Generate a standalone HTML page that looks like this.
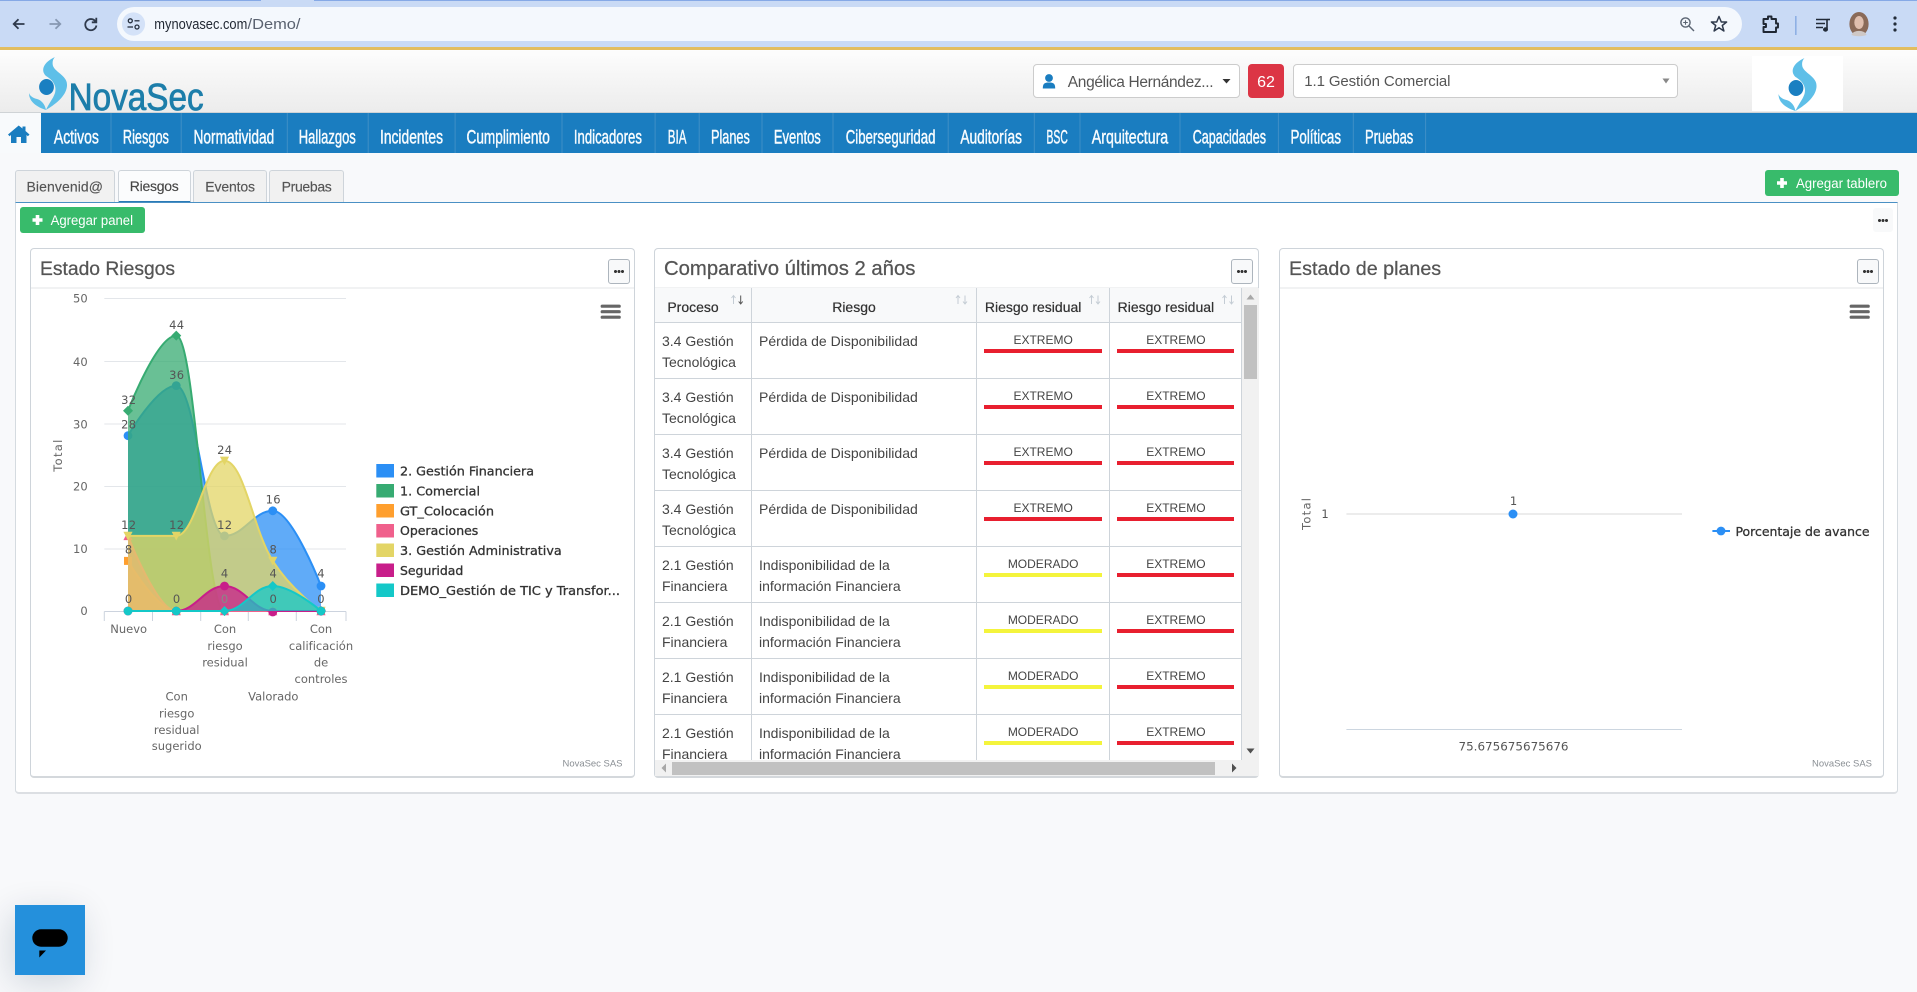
<!DOCTYPE html>
<html lang="es">
<head>
<meta charset="utf-8">
<title>NovaSec</title>
<style>
html,body{margin:0;padding:0;width:1917px;height:992px;overflow:hidden;background:#f8f9fb;font-family:"Liberation Sans",sans-serif;color:#444}
.a{position:absolute}
#top{position:absolute;left:0;top:0;width:1917px;height:47px;background:#c9daf5;border-top:1px solid #86a9e6;box-sizing:border-box}
#hdr{position:absolute;left:0;top:47px;width:1917px;height:66px;box-sizing:border-box;border-top:3px solid #e2bd5f;background:linear-gradient(#fdfdfd,#ececec);border-bottom:1px solid #cfd3d6}
#nav{position:absolute;left:0;top:113px;width:1917px;height:40px;background:#1a7dc0}
.tab{position:absolute;top:170px;height:32px;box-sizing:border-box;background:#f1f1f1;border:1px solid #ced4da;border-bottom:0;border-radius:3px 3px 0 0}
.tab.on{background:#fbfcfd;border-bottom:2px solid #2a7ab5;height:33px}
#content{position:absolute;left:15px;top:202px;width:1883px;height:592px;box-sizing:border-box;background:#fff;border:1px solid #d5dbe0;border-top:1px solid #4a90c4;border-bottom:2px solid #dcdfe3;border-radius:0 0 4px 4px}
.panel{position:absolute;top:248px;width:605px;height:530px;box-sizing:border-box;background:#fff;border:1px solid #ced4da;border-bottom:2px solid #d4d8dc;border-radius:4px}
.phead{position:absolute;left:0;right:0;top:0;height:38px;border-bottom:2px solid #f1f2f3}
.ptitle{position:absolute;left:9px;top:8px;line-height:24px;color:#555;white-space:nowrap;-webkit-text-stroke:.25px #555}
.more{position:absolute;top:9.5px;width:21.5px;height:25px;box-sizing:border-box;background:#f8f9fa;border:1px solid #adb5bd;border-radius:3px}
.more i,.more2 i{position:absolute;left:5px;top:10.5px;width:10px;height:3px;background:radial-gradient(circle 1.5px at 1.5px 1.5px,#333 96%,transparent) 0 0/3.5px 3px repeat-x}
.more2{position:absolute;left:1873px;top:208px;width:20px;height:24px;background:#f8f9fa;border-radius:3px}
.more2 i{left:5px}
#tw{position:absolute;left:655px;top:288px;width:587px;height:472px;overflow:hidden;background:#fff}
#tw table{border-collapse:collapse;table-layout:fixed;width:587px;font-size:14px;color:#444}
#tw th{height:34px;box-sizing:border-box;background:#f8f9fa;border:1px solid #ced4da;border-top:0;border-left:0;font-weight:400;color:#333;text-shadow:0 0 .5px #333;padding:5px 20px 0 0;text-align:center;line-height:17px;font-size:14px;white-space:nowrap}
#tw td{height:56.1px;box-sizing:border-box;border:1px solid #ced4da;border-left:0;vertical-align:top;padding:8px 7px 0;line-height:21px}
#tw tr td:first-child{border-left:0}
.l{margin-top:1px;height:17px;line-height:16.5px;font-size:12px;text-align:center;color:#444;border-bottom:4px solid #e81f2f;box-sizing:content-box}
.y{border-bottom-color:#f4f43c}
.r{border-bottom-color:#e81f2f}
.vbar{position:absolute;left:1242px;top:288px;width:17px;height:472px;background:#f1f1f1}
.hbar{position:absolute;left:655px;top:760px;width:604px;height:16px;background:#f1f1f1}
#chat{position:absolute;left:15px;top:905px;width:70px;height:70px;background:#2490dc;box-shadow:-4px 8px 34px rgba(0,40,70,.16)}
svg{position:absolute;left:0;top:0;overflow:visible}
</style>
</head>
<body>

<div id="top"></div>
<div class="a" style="left:261px;top:0;width:53px;height:1px;background:#c9daf5"></div>
<div class="a" style="left:117px;top:7px;width:1625px;height:34px;border-radius:17px;background:#f4f8fd"></div>
<div id="hdr"></div>
<div id="nav"></div>
<div class="a" style="left:0;top:113px;width:41px;height:40px;background:#f8fafc"></div>

<div class="a" style="left:1033px;top:64px;width:207px;height:34px;box-sizing:border-box;background:#fff;border:1px solid #ccc;border-radius:4px"></div>
<div class="a" style="left:1248px;top:64px;width:36px;height:34px;background:#dc3545;border-radius:4px;color:#fff;font-size:16px;line-height:37px;text-align:center">62</div>
<div class="a" style="left:1293px;top:64px;width:385px;height:34px;box-sizing:border-box;background:#fff;border:1px solid #ccc;border-radius:4px"></div>
<div class="a" style="left:1752px;top:56px;width:91px;height:55px;background:#fff"></div>

<div class="tab" style="left:15px;width:100px"></div>
<div class="tab on" style="left:118px;width:73px"></div>
<div class="tab" style="left:193px;width:74px"></div>
<div class="tab" style="left:269px;width:75px"></div>
<div class="a" style="left:1765px;top:170px;width:134px;height:26px;background:#38bb6b;border-radius:3px"></div>

<div id="content"></div>
<div class="a" style="left:20px;top:207px;width:125px;height:26px;background:#38bb6b;border-radius:3px"></div>
<div class="more2"><i></i></div>

<div class="panel" style="left:30px">
  <div class="phead"></div>
  <div class="ptitle" style="font-size:19.3px;top:9px">Estado Riesgos</div>
  <div class="more" style="left:577px"><i></i></div>
</div>
<div class="panel" style="left:654px">
  <div class="phead"></div>
  <div class="ptitle" style="font-size:20.3px">Comparativo últimos 2 años</div>
  <div class="more" style="left:576px"><i></i></div>
</div>
<div class="panel" style="left:1279px">
  <div class="phead"></div>
  <div class="ptitle" style="font-size:19.7px">Estado de planes</div>
  <div class="more" style="left:577px"><i></i></div>
</div>

<div id="tw">
<table>
<colgroup><col style="width:96.5px"><col style="width:225px"><col style="width:133.3px"><col style="width:132.2px"></colgroup>
<thead><tr>
<th>Proceso</th>
<th>Riesgo</th>
<th>Riesgo residual</th>
<th>Riesgo residual</th>
</tr></thead>
<tbody>
<tr><td>3.4 Gestión Tecnológica</td><td>Pérdida de Disponibilidad</td><td><div class="l r">EXTREMO</div></td><td><div class="l r">EXTREMO</div></td></tr>
<tr><td>3.4 Gestión Tecnológica</td><td>Pérdida de Disponibilidad</td><td><div class="l r">EXTREMO</div></td><td><div class="l r">EXTREMO</div></td></tr>
<tr><td>3.4 Gestión Tecnológica</td><td>Pérdida de Disponibilidad</td><td><div class="l r">EXTREMO</div></td><td><div class="l r">EXTREMO</div></td></tr>
<tr><td>3.4 Gestión Tecnológica</td><td>Pérdida de Disponibilidad</td><td><div class="l r">EXTREMO</div></td><td><div class="l r">EXTREMO</div></td></tr>
<tr><td>2.1 Gestión Financiera</td><td>Indisponibilidad de la<br>información Financiera</td><td><div class="l y">MODERADO</div></td><td><div class="l r">EXTREMO</div></td></tr>
<tr><td>2.1 Gestión Financiera</td><td>Indisponibilidad de la<br>información Financiera</td><td><div class="l y">MODERADO</div></td><td><div class="l r">EXTREMO</div></td></tr>
<tr><td>2.1 Gestión Financiera</td><td>Indisponibilidad de la<br>información Financiera</td><td><div class="l y">MODERADO</div></td><td><div class="l r">EXTREMO</div></td></tr>
<tr><td>2.1 Gestión Financiera</td><td>Indisponibilidad de la<br>información Financiera</td><td><div class="l y">MODERADO</div></td><td><div class="l r">EXTREMO</div></td></tr>
</tbody>
</table>
</div>
<div class="vbar"></div>
<div class="hbar"></div>
<div class="a" style="left:1244px;top:305px;width:13px;height:74px;background:#c1c1c1"></div>
<div class="a" style="left:672px;top:762px;width:543px;height:13px;background:#c1c1c1"></div>

<div id="chat"></div>

<svg width="1917" height="992" viewBox="0 0 1917 992" font-family="'Liberation Sans',sans-serif">
<defs>
<path id="mc" d="M0-4.4A4.4 4.4 0 1 1 0 4.4A4.4 4.4 0 1 1 0-4.4Z"/>
<path id="md" d="M0-5L5 0L0 5L-5 0Z"/>
<path id="ms" d="M-4-4H4V4H-4Z"/>
<path id="mt" d="M0-4.6L4.6 4.2H-4.6Z"/>
<path id="mv" d="M-4.6-4.2H4.6L0 4.6Z"/>
<g id="drop">
<path fill="#5ebfe8" d="M55 57C44 62 40 70 46 76C53 80 57 86 55 93C53 99 49 103 46 110C54 105 66 97 67 86C68 76 56 73 53 66C52 62 53 59 55 57Z"/>
<path fill="#5ebfe8" d="M29 93C29 102 37 107 46 110C45 104 41 100 37 99C33 98 30 96 29 93Z"/>
<ellipse cx="46.5" cy="87" rx="7.4" ry="8" fill="#1a7fc1"/>
</g>
<g id="bars"><path d="M0 1.7H17M0 7.2H17M0 12.7H17" stroke="#666" stroke-width="3.2" stroke-linecap="round" fill="none"/></g>
<g id="ua"><path d="M0 9V1M-2 3L0 .5L2 3" fill="none" stroke="currentColor" stroke-width="1"/></g>
<g id="da"><path d="M0 0V8M-2 6L0 8.5L2 6" fill="none" stroke="currentColor" stroke-width="1"/></g>
</defs>

<!-- browser chrome icons -->
<g fill="none" stroke="#2f3a4c" stroke-width="1.8">
<path d="M24.5 24H14M18.5 19.2L13.7 24L18.5 28.8"/>
<path stroke="#8798b2" d="M49.5 24H60M55.5 19.2L60.3 24L55.5 28.8"/>
<path d="M95.5 21.5A5.6 5.6 0 1 0 96.4 25.5M96.3 17.8V22.3H91.8"/>
</g>
<ellipse cx="133.5" cy="24" rx="11.6" ry="11.6" fill="#d4e2f8"/>
<g fill="none" stroke="#26303f" stroke-width="1.3">
<circle cx="130.3" cy="20.8" r="2"/><path d="M134.5 20.8H139.5"/>
<circle cx="137" cy="27" r="2"/><path d="M127.5 27H133"/>
</g>
<text x="154.3" y="29" font-size="14.5" fill="#232a35" textLength="93" lengthAdjust="spacingAndGlyphs">mynovasec.com</text>
<text x="247.5" y="29" font-size="14.5" fill="#5a6270" textLength="53" lengthAdjust="spacingAndGlyphs">/Demo/</text>

<g fill="none" stroke="#5a6472" stroke-width="1.4">
<circle cx="1685.5" cy="22.5" r="4.6"/><path d="M1689 26L1694 31"/><path stroke-width="1.1" d="M1683.2 22.5H1687.8M1685.5 20.2V24.8"/>
</g>
<path fill="none" stroke="#2f3a4c" stroke-width="1.5" stroke-linejoin="round" d="M1719 16.5L1721.3 22H1726.6L1722.3 25.5L1723.9 31L1719 27.8L1714.1 31L1715.7 25.5L1711.4 22H1716.7Z"/>
<path fill="none" stroke="#1f2733" stroke-width="1.9" stroke-linejoin="round" d="M1763.5 19H1768V16.5H1771.5V19H1776V23.5H1778V27.5H1776V32H1763.5V27H1766V24H1763.5Z"/>
<rect x="1795" y="16" width="1.6" height="19" fill="#8eb0e4"/>
<path d="M1816 19.5H1827M1816 23.5H1825M1816 27.5H1823" stroke="#222b38" stroke-width="1.5"/>
<path d="M1827 20V29" stroke="#222b38" stroke-width="1.6"/><ellipse cx="1825.5" cy="29.5" rx="2.5" ry="2.2" fill="#222b38"/><path d="M1827 19.5H1830" stroke="#222b38" stroke-width="1.6"/>
<ellipse cx="1859" cy="24" rx="9.6" ry="12" fill="#8a6a58"/>
<ellipse cx="1859" cy="22.5" rx="4.7" ry="6.5" fill="#e0bfae"/>
<path d="M1851.5 35C1853 29.5 1865 29.5 1866.5 35C1863 36.6 1855 36.6 1851.5 35Z" fill="#cfc8c5"/>
<circle cx="1895" cy="18" r="1.6" fill="#222b38"/><circle cx="1895" cy="24" r="1.6" fill="#222b38"/><circle cx="1895" cy="30" r="1.6" fill="#222b38"/>

<!-- logos -->
<use href="#drop"/>
<text x="68.6" y="110" font-size="38" fill="#1d7eaa" stroke="#1d7eaa" stroke-width=".8" textLength="135" lengthAdjust="spacingAndGlyphs">NovaSec</text>
<use href="#drop" transform="translate(1749.5 1)"/>

<!-- user dropdown -->
<circle cx="1049" cy="78" r="3.9" fill="#1a7dc0"/>
<path d="M1042.8 88.5C1042.8 83.5 1044.5 82.5 1049 82.5C1053.5 82.5 1055.2 83.5 1055.2 88.5Z" fill="#1a7dc0"/>
<text x="1067.8" y="87" font-size="15.5" fill="#555" textLength="145.7" lengthAdjust="spacing">Angélica Hernández...</text>
<path d="M1222.5 79H1230.5L1226.5 83.5Z" fill="#333"/>
<text x="1304.3" y="86" font-size="15" fill="#555" textLength="146.2" lengthAdjust="spacing">1.1 Gestión Comercial</text>
<path d="M1662.5 78.5H1669.5L1666 83.5Z" fill="#888"/>

<!-- nav -->
<path d="M18.7 125.5L8 134.5L9.6 136.2L11 135V143H16.5V137H21V143H26.5V135L27.9 136.2L29.5 134.5L25.5 131V126.5H22.5V128.5Z" fill="#1a7dc0"/>
<g stroke="#3f8fc6" stroke-width="1">
<path d="M111 113V153M181.2 113V153M287.3 113V153M368.2 113V153M455.1 113V153M562 113V153M655.1 113V153M699.2 113V153M762 113V153M833 113V153M948.2 113V153M1034.3 113V153M1080 113V153M1180 113V153M1278.4 113V153M1353.3 113V153M1425.6 113V153"/>
</g>
<g font-size="19" fill="#f7fbfe" stroke="#f7fbfe" stroke-width=".45">
<text x="53.9" y="143.3" textLength="45" lengthAdjust="spacingAndGlyphs">Activos</text>
<text x="122.9" y="143.3" textLength="46" lengthAdjust="spacingAndGlyphs">Riesgos</text>
<text x="193.5" y="143.3" textLength="80.8" lengthAdjust="spacingAndGlyphs">Normatividad</text>
<text x="298.8" y="143.3" textLength="57" lengthAdjust="spacingAndGlyphs">Hallazgos</text>
<text x="380" y="143.3" textLength="63" lengthAdjust="spacingAndGlyphs">Incidentes</text>
<text x="466.5" y="143.3" textLength="83.3" lengthAdjust="spacingAndGlyphs">Cumplimiento</text>
<text x="573.9" y="143.3" textLength="68" lengthAdjust="spacingAndGlyphs">Indicadores</text>
<text x="667.8" y="143.3" textLength="18.7" lengthAdjust="spacingAndGlyphs">BIA</text>
<text x="711" y="143.3" textLength="38.8" lengthAdjust="spacingAndGlyphs">Planes</text>
<text x="773.9" y="143.3" textLength="46.9" lengthAdjust="spacingAndGlyphs">Eventos</text>
<text x="845.7" y="143.3" textLength="89.8" lengthAdjust="spacingAndGlyphs">Ciberseguridad</text>
<text x="960.4" y="143.3" textLength="61.6" lengthAdjust="spacingAndGlyphs">Auditorías</text>
<text x="1046.5" y="143.3" textLength="21.3" lengthAdjust="spacingAndGlyphs">BSC</text>
<text x="1091.8" y="143.3" textLength="76.4" lengthAdjust="spacingAndGlyphs">Arquitectura</text>
<text x="1192.7" y="143.3" textLength="73.3" lengthAdjust="spacingAndGlyphs">Capacidades</text>
<text x="1290.5" y="143.3" textLength="50.5" lengthAdjust="spacingAndGlyphs">Políticas</text>
<text x="1365" y="143.3" textLength="48.3" lengthAdjust="spacingAndGlyphs">Pruebas</text>
</g>

<!-- tabs -->
<g font-size="14" fill="#555" stroke="#555" stroke-width=".15">
<text x="26.5" y="191.5" textLength="76.5">Bienvenid@</text>
<text x="129.8" y="191" textLength="49" fill="#444">Riesgos</text>
<text x="205.3" y="191.5" textLength="49.7">Eventos</text>
<text x="281.6" y="191.5" textLength="50.2">Pruebas</text>
</g>

<!-- buttons -->
<path d="M37.5 215V225M32.5 220H42.5" stroke="#fff" stroke-width="3.6"/>
<text x="50.6" y="225" font-size="13.5" fill="#fff" textLength="82.4" lengthAdjust="spacingAndGlyphs">Agregar panel</text>
<path d="M1782 178V188M1777 183H1787" stroke="#fff" stroke-width="3.6"/>
<text x="1796" y="188" font-size="13.5" fill="#fff" textLength="91" lengthAdjust="spacingAndGlyphs">Agregar tablero</text>

<!-- sort arrows -->
<g color="#c4ccd4">
<use href="#ua" x="733.5" y="295"/><use href="#da" x="740.7" y="295.5" color="#555"/>
<use href="#ua" x="958" y="295"/><use href="#da" x="965" y="295.5"/>
<use href="#ua" x="1091.5" y="295"/><use href="#da" x="1098" y="295.5"/>
<use href="#ua" x="1224.5" y="295"/><use href="#da" x="1231.5" y="295.5"/>
</g>

<!-- chart 1 -->
<g stroke="#e3e6ea" stroke-width="1">
<path d="M104.3 298.5H346M104.3 361.5H346M104.3 424H346M104.3 486.5H346M104.3 549H346"/>
</g>
<path d="M104.3 611.5H346M104.3 611.5V621M152.5 611.5V621M200.7 611.5V621M248.3 611.5V621M296.3 611.5V621M346 611.5V621" stroke="#ccd3de" stroke-width="1" fill="none"/>

<g stroke-width="2">
<g fill="#2b8ff5" stroke="#2b8ff5">
<path fill-opacity=".75" stroke="none" d="M128 435.7C128 435.7 156.95 385.6 176.25 385.6C195.55 385.6 205.2 535.9 224.5 535.9C243.8 535.9 253.45 510.8 272.75 510.8C292.05 510.8 321 586 321 586L321 611L128 611Z"/>
<path fill="none" d="M128 435.7C128 435.7 156.95 385.6 176.25 385.6C195.55 385.6 205.2 535.9 224.5 535.9C243.8 535.9 253.45 510.8 272.75 510.8C292.05 510.8 321 586 321 586"/>
<g stroke="none"><use href="#mc" x="128" y="435.7"/><use href="#mc" x="176.25" y="385.6"/><use href="#mc" x="224.5" y="535.9"/><use href="#mc" x="272.75" y="510.8"/><use href="#mc" x="321" y="586"/></g>
</g>
<g fill="#37ab72" stroke="#37ab72">
<path fill-opacity=".75" stroke="none" d="M128 410.7C128 410.7 156.95 335.6 176.25 335.6C195.55 335.6 205.2 611 224.5 611L321 611L128 611Z"/>
<path fill="none" d="M128 410.7C128 410.7 156.95 335.6 176.25 335.6C195.55 335.6 205.2 611 224.5 611L321 611"/>
<g stroke="none"><use href="#md" x="128" y="410.7"/><use href="#md" x="176.25" y="335.6"/><use href="#md" x="224.5" y="611"/><use href="#md" x="272.75" y="611"/><use href="#md" x="321" y="611"/></g>
</g>
<g fill="#ff9f2e" stroke="#ff9f2e">
<path fill-opacity=".75" stroke="none" d="M128 560.9C128 560.9 156.95 611 176.25 611L321 611L128 611Z"/>
<path fill="none" d="M128 560.9C128 560.9 156.95 611 176.25 611L321 611"/>
<g stroke="none"><use href="#ms" x="128" y="560.9"/><use href="#ms" x="176.25" y="611"/><use href="#ms" x="224.5" y="611"/><use href="#ms" x="272.75" y="611"/><use href="#ms" x="321" y="611"/></g>
</g>
<g fill="#f0608c" stroke="#f0608c">
<path fill-opacity=".75" stroke="none" d="M128 535.9C128 535.9 156.95 611 176.25 611L321 611L128 611Z"/>
<path fill="none" d="M128 535.9C128 535.9 156.95 611 176.25 611L321 611"/>
<g stroke="none"><use href="#mt" x="128" y="535.9"/><use href="#mt" x="176.25" y="611"/><use href="#mt" x="224.5" y="611"/><use href="#mt" x="272.75" y="611"/><use href="#mt" x="321" y="611"/></g>
</g>
<g fill="#e3d566" stroke="#e3d566">
<path fill-opacity=".75" stroke="none" d="M128 535.9C128 535.9 156.95 535.9 176.25 535.9C195.55 535.9 205.2 460.8 224.5 460.8C243.8 460.8 253.45 530.9 272.75 560.9C292.05 591 321 611 321 611L128 611Z"/>
<path fill="none" d="M128 535.9C128 535.9 156.95 535.9 176.25 535.9C195.55 535.9 205.2 460.8 224.5 460.8C243.8 460.8 253.45 530.9 272.75 560.9C292.05 591 321 611 321 611"/>
<g stroke="none"><use href="#mv" x="128" y="535.9"/><use href="#mv" x="176.25" y="535.9"/><use href="#mv" x="224.5" y="460.8"/><use href="#mv" x="272.75" y="560.9"/><use href="#mv" x="321" y="611"/></g>
</g>
<g fill="#c81e8a" stroke="#c81e8a">
<path fill-opacity=".75" stroke="none" d="M128 611L176.25 611C195.55 611 205.2 586 224.5 586C243.8 586 253.45 611 272.75 611L321 611Z"/>
<path fill="none" d="M128 611L176.25 611C195.55 611 205.2 586 224.5 586C243.8 586 253.45 611 272.75 611L321 611"/>
<g stroke="none"><use href="#mc" x="128" y="611"/><use href="#mc" x="176.25" y="611"/><use href="#mc" x="224.5" y="586"/><use href="#mc" x="272.75" y="612"/><use href="#mc" x="321" y="611"/></g>
</g>
<g fill="#14c8c8" stroke="#14c8c8">
<path fill-opacity=".75" stroke="none" d="M128 611L224.5 611C243.8 611 253.45 586 272.75 586C292.05 586 321 611 321 611Z"/>
<path fill="none" d="M128 611L224.5 611C243.8 611 253.45 586 272.75 586C292.05 586 321 611 321 611"/>
<g stroke="none"><use href="#mc" x="128" y="611"/><use href="#mc" x="176.25" y="611"/><use href="#md" x="224.5" y="611"/><use href="#md" x="272.75" y="586"/><use href="#mc" x="321" y="611"/></g>
</g>
</g>

<g font-family="'DejaVu Sans',sans-serif" font-size="11.5" fill="#555" text-anchor="middle" letter-spacing=".3">
<text x="128.7" y="404">32</text><text x="128.7" y="428.5">28</text>
<text x="176.7" y="329">44</text><text x="176.7" y="379">36</text>
<text x="224.7" y="454">24</text><text x="273.3" y="503.5">16</text>
<text x="128.7" y="529">12</text><text x="176.7" y="529">12</text><text x="224.7" y="529">12</text>
<text x="128.7" y="553.5">8</text><text x="273.3" y="553.5">8</text>
<text x="224.7" y="577.5">4</text><text x="273.3" y="577.5">4</text><text x="321" y="577.5">4</text>
<text x="128.7" y="603">0</text><text x="176.7" y="603">0</text><text x="224.7" y="603" fill="#888">0</text><text x="273.3" y="603">0</text><text x="321" y="603">0</text>
</g>
<g font-family="'DejaVu Sans',sans-serif" font-size="11.5" fill="#666">
<g text-anchor="end">
<text x="87.7" y="302.5">50</text><text x="87.7" y="366">40</text><text x="87.7" y="428.5">30</text><text x="87.7" y="490.5">20</text><text x="87.7" y="553">10</text><text x="87.7" y="615">0</text>
</g>
<text transform="translate(62 455.7) rotate(-90)" text-anchor="middle" textLength="32">Total</text>
<g text-anchor="middle">
<text x="128.7" y="633">Nuevo</text>
<text x="225" y="633">Con</text><text x="225" y="650">riesgo</text><text x="225" y="666.3">residual</text>
<text x="321" y="633">Con</text><text x="321" y="650">calificación</text><text x="321" y="666.3">de</text><text x="321" y="683">controles</text>
<text x="176.7" y="700.7">Con</text><text x="176.7" y="717.3">riesgo</text><text x="176.7" y="734">residual</text><text x="176.7" y="750">sugerido</text>
<text x="273.3" y="700.7">Valorado</text>
</g>
</g>

<!-- legend -->
<g>
<rect x="376.3" y="464" width="17.7" height="13.5" fill="#2b8ff5"/>
<rect x="376.3" y="484" width="17.7" height="13.5" fill="#37ab72"/>
<rect x="376.3" y="504" width="17.7" height="13.5" fill="#ff9f2e"/>
<rect x="376.3" y="524" width="17.7" height="13.5" fill="#f0608c"/>
<rect x="376.3" y="543.5" width="17.7" height="13.5" fill="#e3d566"/>
<rect x="376.3" y="563.5" width="17.7" height="13.5" fill="#c81e8a"/>
<rect x="376.3" y="583.5" width="17.7" height="13.5" fill="#14c8c8"/>
</g>
<g font-family="'DejaVu Sans',sans-serif" font-size="12" fill="#333" stroke="#333" stroke-width=".3">
<text x="400" y="475.5" textLength="134" lengthAdjust="spacingAndGlyphs">2. Gestión Financiera</text>
<text x="400" y="495.5" textLength="80" lengthAdjust="spacingAndGlyphs">1. Comercial</text>
<text x="400" y="515.5" textLength="94" lengthAdjust="spacingAndGlyphs">GT_Colocación</text>
<text x="400" y="535" textLength="78.3" lengthAdjust="spacingAndGlyphs">Operaciones</text>
<text x="400" y="555" textLength="161.7" lengthAdjust="spacingAndGlyphs">3. Gestión Administrativa</text>
<text x="400" y="575" textLength="63.3" lengthAdjust="spacingAndGlyphs">Seguridad</text>
<text x="400" y="595" textLength="220" lengthAdjust="spacingAndGlyphs">DEMO_Gestión de TIC y Transfor...</text>
</g>

<use href="#bars" x="602.2" y="304.5"/>
<use href="#bars" x="1851.2" y="304.5"/>

<g font-size="9.5" fill="#8a8f94">
<text x="562.5" y="766.7" textLength="60" lengthAdjust="spacingAndGlyphs">NovaSec SAS</text>
<text x="1812" y="766.7" textLength="60" lengthAdjust="spacingAndGlyphs">NovaSec SAS</text>
</g>

<!-- chart 3 -->
<path d="M1346.4 514H1682" stroke="#e6e6e6" stroke-width="1.6"/>
<path d="M1346.4 729.5H1682" stroke="#ccd6e0" stroke-width="1"/>
<circle cx="1513" cy="514" r="4.5" fill="#2b8ff5"/>
<g font-family="'DejaVu Sans',sans-serif" font-size="11.5" fill="#555" text-anchor="middle">
<text x="1513.5" y="505">1</text>
<text x="1325" y="518">1</text>
<text x="1513.5" y="750.5" textLength="110" lengthAdjust="spacingAndGlyphs">75.675675675676</text>
<text transform="translate(1310.5 514) rotate(-90)" textLength="32" fill="#666">Total</text>
</g>
<path d="M1712.4 531H1730" stroke="#2b8ff5" stroke-width="2"/><circle cx="1721" cy="531" r="4.4" fill="#2b8ff5"/>
<text x="1735.5" y="536" font-family="'DejaVu Sans',sans-serif" font-size="12" fill="#333" stroke="#333" stroke-width=".3" textLength="134" lengthAdjust="spacingAndGlyphs">Porcentaje de avance</text>

<!-- scroll arrows -->
<path d="M1250.5 294.5L1254.5 299.5H1246.5Z" fill="#a8a8a8"/>
<path d="M1250.5 753.5L1254.5 748.5H1246.5Z" fill="#505050"/>
<path d="M661.5 768L666 763.5V772.5Z" fill="#a8a8a8"/>
<path d="M1236.5 768L1232 763.5V772.5Z" fill="#505050"/>

<!-- chat -->
<rect x="32.3" y="929.3" width="35.4" height="17.4" rx="8.7" fill="#000"/>
<path d="M39.3 950.5H46L39.3 957.5Z" fill="#000"/>
</svg>

</body>
</html>
